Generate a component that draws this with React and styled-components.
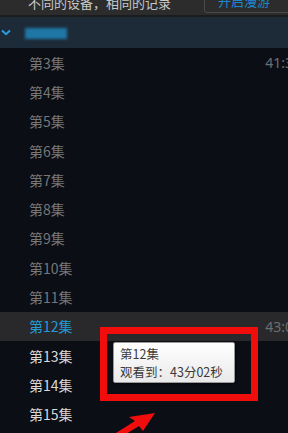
import React from "react";
import styled, { createGlobalStyle } from "styled-components";

const Global = createGlobalStyle`
  html, body { margin: 0; padding: 0; background: #0b0e15; }
  body { width: 288px; height: 433px; overflow: hidden; font-family: "Noto Sans CJK SC", "Noto Sans", sans-serif; }
`;

const Page = styled.div`
  position: relative;
  width: 288px;
  height: 433px;
  overflow: hidden;
  background: #0b0e15;
  display: flex;
  flex-direction: column;
`;

const TopBar = styled.div`
  height: 15px;
  background: #2c2c2d;
  border-bottom: 2px solid #1b1c1e;
  display: flex;
  align-items: flex-end;
  justify-content: space-between;
  overflow: hidden;
`;

const TopText = styled.span`
  color: #c9c9c9;
  font-size: 13px;
  line-height: 13px;
  margin-left: 28px;
  margin-bottom: 6px;
  white-space: nowrap;
`;

const SyncButton = styled.div`
  align-self: flex-start;
  margin-top: -6px;
  width: 88px;
  height: 19px;
  margin-right: -4px;
  border: 1px solid #4a4a4c;
  border-radius: 3px;
  color: #1d87cc;
  font-size: 13px;
  line-height: 13px;
  padding-left: 13px;
  box-sizing: border-box;
  display: flex;
  align-items: flex-end;
  padding-bottom: 5px;
  white-space: nowrap;
`;

const Header = styled.div`
  height: 31px;
  background: #1d2a37;
  display: flex;
  align-items: center;
  gap: 14px;
  padding-left: 1px;
`;

const Blur = styled.div`
  width: 42px;
  height: 11px;
  background: #1f77a6;
  filter: blur(1.5px);
  margin-top: 1px;
`;

const List = styled.div`
  display: flex;
  flex-direction: column;
`;

const Row = styled.div`
  height: 29.3px;
  display: flex;
  align-items: center;
  justify-content: space-between;
  background: ${(p) => (p.$active ? "#29292b" : "transparent")};
`;

const Label = styled.span`
  margin-left: 29px;
  font-size: 14px;
  color: ${(p) => (p.$active ? "#229ad8" : p.$watched ? "#767779" : "#d9d9d9")};
`;

const Time = styled.span`
  font-size: 14px;
  color: #6d6e70;
  margin-right: -5px;
  font-family: "Noto Sans", sans-serif;
`;

const RedBox = styled.div`
  position: absolute;
  left: 100px;
  top: 327px;
  width: 158px;
  height: 74px;
  border: 7px solid #f20d0d;
  box-sizing: border-box;
`;

const Tooltip = styled.div`
  position: absolute;
  left: 113px;
  top: 342px;
  width: 122px;
  height: 41px;
  box-sizing: border-box;
  background: linear-gradient(#ffffff, #e9e9ea);
  border: 1px solid #9a9a9a;
  border-radius: 2px;
  box-shadow: 1px 1px 2px rgba(0,0,0,0.5);
  padding: 2px 0 0 6px;
  color: #3a3a3a;
  font-size: 12.5px;
  line-height: 18px;
  white-space: nowrap;
`;

const Arrow = styled.svg`
  position: absolute;
  left: 100px;
  top: 400px;
`;

const episodes = [3,4,5,6,7,8,9,10,11,12,13,14,15];

export default function App() {
  return (
    <Page>
      <Global />
      <TopBar>
        <TopText>不同的设备，相同的记录</TopText>
        <SyncButton>开启漫游</SyncButton>
      </TopBar>
      <Header>
        <svg width="10" height="7" viewBox="0 0 10 7">
          <path d="M1 1.5 L5 5.2 L9 1.5" stroke="#2a9ee0" strokeWidth="2" fill="none" />
        </svg>
        <Blur />
      </Header>
      <List>
        {episodes.map((n) => (
          <Row key={n} $active={n === 12}>
            <Label $active={n === 12} $watched={n < 12}>第{n}集</Label>
            {n === 3 && <Time>41:3</Time>}
            {n === 12 && <Time>43:0</Time>}
          </Row>
        ))}
      </List>
      <RedBox />
      <Tooltip>
        <div>第12集</div>
        <div>观看到：43分02秒</div>
      </Tooltip>
      <Arrow width="60" height="33" viewBox="0 0 60 33">
        <path d="M55 13 L29 17 L35 21 L8 38 L13 42 L39 26 L43 31 Z" fill="#f20d0d" />
      </Arrow>
    </Page>
  );
}
